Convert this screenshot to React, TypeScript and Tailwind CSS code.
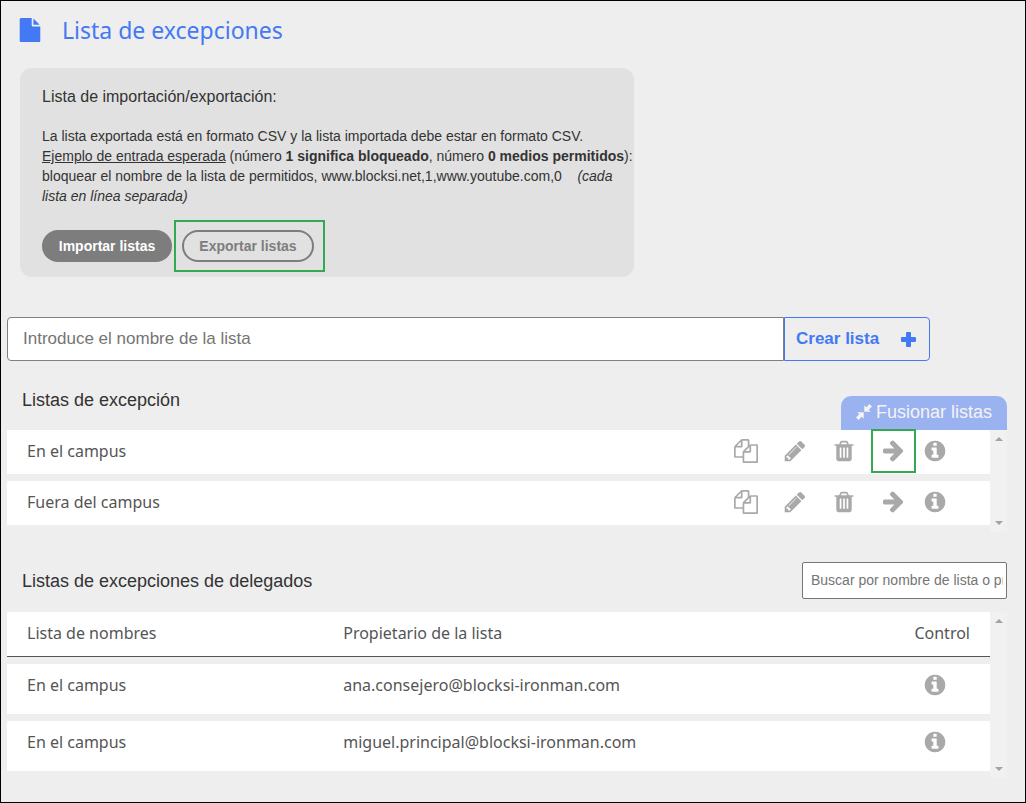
import React, { useState } from 'react';

const ICONS = {
  file: 'M1152 512v-472q22 14 36 28l408 408q14 14 28 36h-472zm-128 32q0 40 28 68t68 28h544v1056q0 40-28 68t-68 28h-1344q-40 0-68-28t-28-68v-1600q0-40 28-68t68-28h800v544z',
  copy: 'M1696 384q40 0 68 28t28 68v1216q0 40-28 68t-68 28h-960q-40 0-68-28t-28-68v-288h-544q-40 0-68-28t-28-68v-672q0-40 20-88t48-76l408-408q28-28 76-48t88-20h416q40 0 68 28t28 68v328q68-40 128-40h416zm-544 213l-299 299h299v-299zm-640-384l-299 299h299v-299zm196 647l316-316v-416h-384v416q0 40-28 68t-68 28h-416v640h512v-256q0-40 20-88t48-76zm956 804v-1152h-384v416q0 40-28 68t-68 28h-416v640h896z',
  pencil: 'M491 1536l91-91-235-235-91 91v107h128v128h107zm523-928q0-22-22-22-10 0-17 7l-542 542q-7 7-7 17 0 22 22 22 10 0 17-7l542-542q7-7 7-17zm-54-192l416 416-832 832h-416v-416zm683 96q0 53-37 90l-166 166-416-416 166-165q36-38 90-38 53 0 91 38l235 234q37 39 37 91z',
  trash: 'M704 1376v-704q0-14-9-23t-23-9h-64q-14 0-23 9t-9 23v704q0 14 9 23t23 9h64q14 0 23-9t9-23zm256 0v-704q0-14-9-23t-23-9h-64q-14 0-23 9t-9 23v704q0 14 9 23t23 9h64q14 0 23-9t9-23zm256 0v-704q0-14-9-23t-23-9h-64q-14 0-23 9t-9 23v704q0 14 9 23t23 9h64q14 0 23-9t9-23zm-544-992h448l-48-117q-7-9-17-11h-317q-10 2-17 11zm928 32v64q0 14-9 23t-23 9h-96v948q0 83-47 143.5t-113 60.5h-832q-66 0-113-58.5t-47-141.5v-952h-96q-14 0-23-9t-9-23v-64q0-14 9-23t23-9h309l70-167q15-37 54-63t79-26h320q40 0 79 26t54 63l70 167h309q14 0 23 9t9 23z',
  arrow: 'M1650 896q0 54-37 91l-651 651q-39 37-91 37-51 0-90-37l-75-75q-38-38-38-91t38-91l293-293h-734q-52 0-84.5-37.5t-32.5-90.5v-128q0-53 32.5-90.5t84.5-37.5h734l-293-294q-38-36-38-90t38-90l75-75q38-38 90-38 53 0 91 38l651 651q37 35 37 90z',
  info: 'M1152 1376v-160q0-14-9-23t-23-9h-96v-512q0-14-9-23t-23-9h-320q-14 0-23 9t-9 23v160q0 14 9 23t23 9h96v320h-96q-14 0-23 9t-9 23v160q0 14 9 23t23 9h448q14 0 23-9t9-23zm-128-896v-160q0-14-9-23t-23-9h-192q-14 0-23 9t-9 23v160q0 14 9 23t23 9h192q14 0 23-9t9-23zm640 416q0 209-103 385.5t-279.5 279.5-385.5 103-385.5-103-279.5-279.5-103-385.5 103-385.5 279.5-279.5 385.5-103 385.5 103 279.5 279.5 103 385.5z',
};

const Icon: React.FC<{ name: keyof typeof ICONS }> = ({ name }) => (
  <svg viewBox="0 0 1792 1792" fill="currentColor" className="size-6" aria-hidden="true">
    <path d={ICONS[name]} />
  </svg>
);

const IconButton: React.FC<{ name: keyof typeof ICONS; label: string }> = ({ name, label }) => (
  <button type="button" aria-label={label} className="block text-[#a9a9a9] hover:text-[#7d7d7d]">
    <Icon name={name} />
  </button>
);

// Scroll track shown to the right of both lists
const ScrollTrack = () => (
  <div className="flex w-[17px] shrink-0 flex-col items-center justify-between bg-[#f1f1f1] py-[7px]" aria-hidden="true">
    <svg viewBox="0 0 8 4" className="h-1 w-2 fill-[#a3a3a3]"><path d="M4 0l4 4H0z" /></svg>
    <svg viewBox="0 0 8 4" className="h-1 w-2 fill-[#a3a3a3]"><path d="M4 4L0 0h8z" /></svg>
  </div>
);

const lists = [
  { name: 'En el campus', highlighted: true },
  { name: 'Fuera del campus', highlighted: false },
];

const delegated = [
  { name: 'En el campus', owner: 'ana.consejero@blocksi-ironman.com' },
  { name: 'En el campus', owner: 'miguel.principal@blocksi-ironman.com' },
];

const App: React.FC = () => {
  const [listName, setListName] = useState('');
  const [search, setSearch] = useState('');

  return (
    <div className="min-h-screen border border-black bg-[#eeeeee] pr-[18px] pb-6 pl-[6px] font-['Liberation_Sans',Arial,sans-serif] text-[#333]">
      <header className="flex items-center gap-5 pt-[11px] pl-[11px] text-[#4479f4]">
        <Icon name="file" />
        <h1 className="font-['Noto_Sans',sans-serif] text-[23px] leading-9">Lista de excepciones</h1>
      </header>

      <section className="mt-5 ml-[13px] w-[614px] max-w-full rounded-xl bg-[#e1e1e1] pt-[19px] pb-[15px] pl-[22px]">
        <h2 className="text-base leading-5">Lista de importación/exportación:</h2>
        <p className="mt-[19px] text-sm leading-5">
          La lista exportada está en formato CSV y la lista importada debe estar en formato CSV.
          <br />
          <span className="underline">Ejemplo de entrada esperada</span> (número <b>1 significa bloqueado</b>, número{' '}
          <b>0 medios permitidos</b>):
          <br />
          bloquear el nombre de la lista de permitidos, www.blocksi.net,1,www.youtube.com,0 &nbsp;&nbsp;{' '}
          <i>(cada</i>
          <br />
          <i>lista en línea separada)</i>
        </p>
        <div className="mt-6 flex gap-[10px] text-sm font-bold">
          <button type="button" className="h-8 w-[130px] rounded-full bg-[#7d7d7d] text-white">Importar listas</button>
          <div className="relative">
            <button type="button" className="h-8 w-[132px] rounded-full border-2 border-[#7d7d7d] text-[#7d7d7d]">
              Exportar listas
            </button>
            <span className="pointer-events-none absolute -inset-y-[10px] -right-[11px] -left-2 border-2 border-[#34a853]" />
          </div>
        </div>
      </section>

      <form className="mt-10 mr-[77px] flex h-11" onSubmit={(e) => e.preventDefault()}>
        <input
          type="text"
          aria-label="Nombre de la lista"
          value={listName}
          onChange={(e) => setListName(e.target.value)}
          placeholder="Introduce el nombre de la lista"
          className="min-w-0 flex-1 rounded-l border border-[#808080] bg-white px-[15px] text-[17px] outline-none placeholder:text-[#757575]"
        />
        <button
          type="submit"
          className="flex w-[146px] items-center justify-between rounded-r border border-[#4479f4] pr-[13px] pl-[11px] text-[17px] font-bold text-[#4479f4]"
        >
          Crear lista
          <svg viewBox="0 0 15 15" className="size-[15px] fill-current" aria-hidden="true">
            <path d="M6 0h3q1 0 1 1v4h4q1 0 1 1v3q0 1-1 1h-4v4q0 1-1 1H6q-1 0-1-1v-4H1q-1 0-1-1V6q0-1 1-1h4V1q0-1 1-1z" />
          </svg>
        </button>
      </form>

      <section className="mt-[30px]">
        <div className="flex justify-between pl-[15px]">
          <h2 className="text-lg leading-none">Listas de excepción</h2>
          <button type="button" className="mt-[5px] flex h-[34px] items-center gap-1 rounded-t-[10px] bg-[#9bb2f0] px-[15px] pb-0.5 text-lg leading-none text-[#f4f4f4]">
            <svg viewBox="0 0 16 16" className="size-4 fill-current" aria-hidden="true">
              <path d="M8.3 7.7V1.3l2 2L13.6 0 16 2.4l-3.3 3.3 2 2zM7.7 8.3v6.4l-2-2L2.4 16 0 13.6l3.3-3.3-2-2z" />
            </svg>
            Fusionar listas
          </button>
        </div>
        <div className="flex">
          <ul className="flex flex-1 flex-col gap-[7px] pb-[7px]">
            {lists.map((list) => (
              <li key={list.name} className="flex h-11 items-center justify-between bg-white pr-[43px] pb-0.5 pl-5">
                <span className="font-['Noto_Sans',sans-serif] text-base text-[#555]">{list.name}</span>
                <div className="flex items-center gap-[18px]">
                  <div className="flex items-center gap-[25px]">
                    <IconButton name="copy" label="Copiar" />
                    <IconButton name="pencil" label="Editar" />
                    <IconButton name="trash" label="Eliminar" />
                    <div className="relative">
                      <IconButton name="arrow" label="Mover" />
                      {list.highlighted && (
                        <span className="pointer-events-none absolute -inset-[10px] -right-[11px] border-2 border-[#34a853]" />
                      )}
                    </div>
                  </div>
                  <IconButton name="info" label="Información" />
                </div>
              </li>
            ))}
          </ul>
          <ScrollTrack />
        </div>
      </section>

      <section className="mt-[30px]">
        <div className="flex items-center justify-between pl-[15px]">
          <h2 className="text-lg">Listas de excepciones de delegados</h2>
          <input
            type="text"
            aria-label="Buscar lista"
            value={search}
            onChange={(e) => setSearch(e.target.value)}
            placeholder="Buscar por nombre de lista o propietario"
            className="h-[37px] w-[205px] rounded-xs border border-[#767676] bg-white pr-[3px] pb-0.5 pl-2 text-sm outline-none placeholder:text-[#757575]"
          />
        </div>
        <div className="mt-[13px] flex">
          <div className="flex-1 pb-[7px]">
            <table className="w-full table-fixed border-separate border-spacing-0 text-left font-['Noto_Sans',sans-serif] text-base text-[#555]">
              <thead>
                <tr className="h-[45px] bg-white">
                  <th className="w-[34%] border-b border-[#555] pb-0.5 pl-5 font-normal">Lista de nombres</th>
                  <th className="border-b border-[#555] pb-0.5 pl-0.5 font-normal">Propietario de la lista</th>
                  <th className="w-[20%] border-b border-[#555] pr-5 pb-0.5 text-right font-normal">Control</th>
                </tr>
              </thead>
              <tbody>
                {delegated.map((row) => (
                  <tr key={row.owner} className="h-[57px] bg-white align-top">
                    <td className="border-t-[7px] border-[#eeeeee] pt-[9px] pl-5">{row.name}</td>
                    <td className="border-t-[7px] border-[#eeeeee] pt-[9px] pl-0.5">{row.owner}</td>
                    <td className="border-t-[7px] border-[#eeeeee] pt-[9px] pr-[43px]">
                      <div className="flex justify-end">
                        <IconButton name="info" label="Información" />
                      </div>
                    </td>
                  </tr>
                ))}
              </tbody>
            </table>
          </div>
          <ScrollTrack />
        </div>
      </section>
    </div>
  );
};

export default App;
